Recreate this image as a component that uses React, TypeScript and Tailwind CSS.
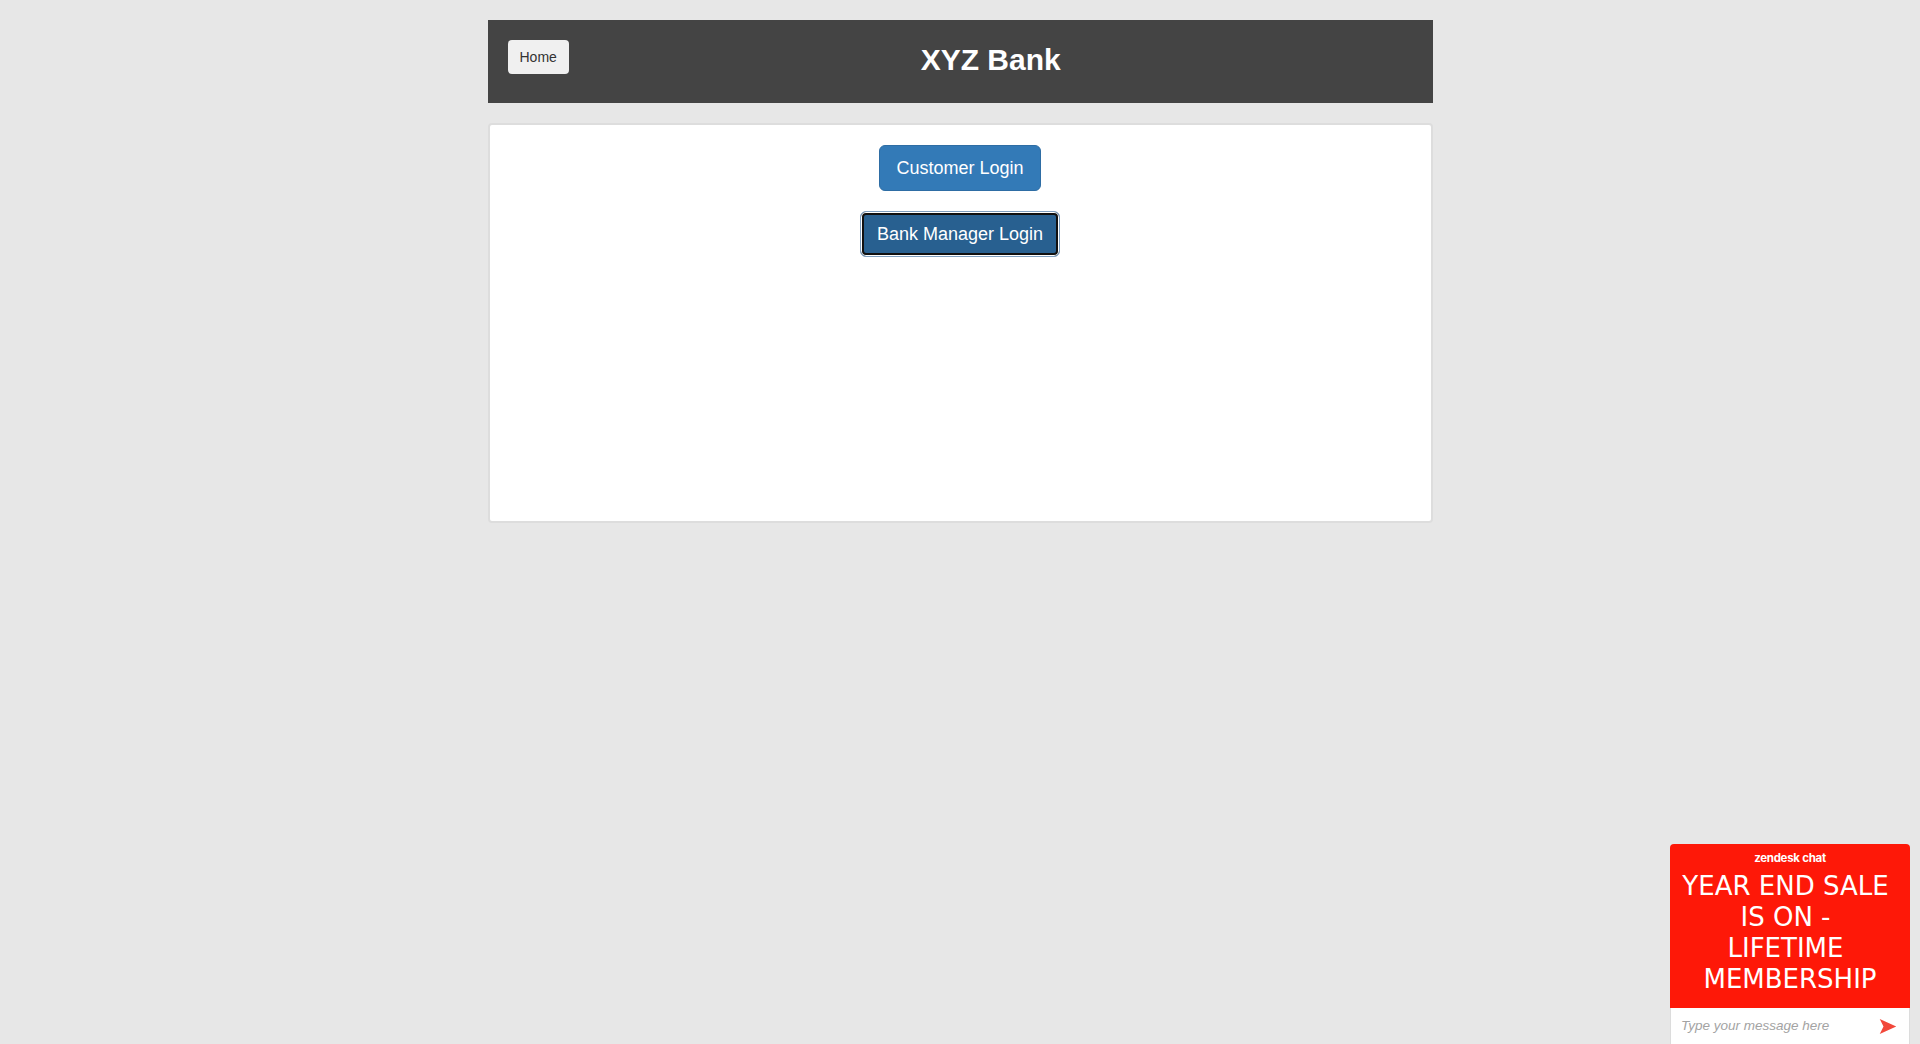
import React from "react";

function SendIcon() {
    return (
        <svg width="18" height="17" viewBox="0 0 24 22" fill="#f2473a">
            <path d="M1 1 L23 11 L1 21 L6 11 Z" />
        </svg>
    );
}

function ChatWidget() {
    return (
        <div className="fixed right-[10px] bottom-0 w-[240px] h-[200px] flex flex-col rounded-t-[4px] overflow-hidden">
            <div className="flex-1 bg-[#fe1808] flex flex-col items-center pt-[8px]">
                <span className="text-[11.5px] leading-[13px] font-bold text-white tracking-tight" style={{ fontFamily: "Inter, 'Noto Sans', sans-serif" }}>
                    zendesk chat
                </span>
                <div
                    className="mt-[6px] w-full text-center text-white text-[26px] leading-[31px]"
                    style={{ fontFamily: "'DejaVu Sans', Verdana, sans-serif" }}
                >
                    <div className="pr-[9px]">YEAR END SALE</div>
                    <div className="pr-[9px]">IS ON -</div>
                    <div className="pr-[9px]">LIFETIME</div>
                    <div>MEMBERSHIP</div>
                </div>
            </div>
            <div className="h-[36px] bg-white border-x border-[#dcdcdc] flex items-center justify-between pl-[10px] pr-[12px]">
                <span className="text-[13.5px] italic text-[#a3a3a3]">Type your message here</span>
                <SendIcon />
            </div>
        </div>
    );
}

export default function App() {
    return (
        <div className="min-h-[1044px] bg-[#e7e7e7] pt-5" style={{ fontFamily: "'Liberation Sans', Arial, sans-serif" }}>
            <div className="w-[945px] mx-auto">
                {/* Header */}
                <div className="h-[83px] bg-[#444444] flex items-start px-5 pt-5">
                    <button className="h-[34px] px-3 rounded-[4px] bg-[#f0f0f0] text-[14px] text-[#333] leading-5">
                        Home
                    </button>
                    <div className="flex-1 text-center text-white font-bold text-[30px] leading-[40px]">XYZ Bank</div>
                </div>

                {/* Login card */}
                <div className="mt-5 h-[400px] bg-white border-2 border-[#dddddd] rounded-[4px] pt-5">
                    <div className="flex flex-col items-center gap-[20px]">
                        <button className="h-[46px] px-4 rounded-[6px] bg-[#337ab7] border border-[#2e6da4] text-white text-[18px] leading-6">
                            Customer Login
                        </button>
                        <button className="h-[46px] px-4 rounded-[6px] bg-[#286090] border border-[#7f9fbf] text-white text-[18px] leading-6 shadow-[inset_0_0_0_1px_#ffffff,inset_0_0_0_3px_#101010]">
                            Bank Manager Login
                        </button>
                    </div>
                </div>
            </div>
            <ChatWidget />
        </div>
    );
}
